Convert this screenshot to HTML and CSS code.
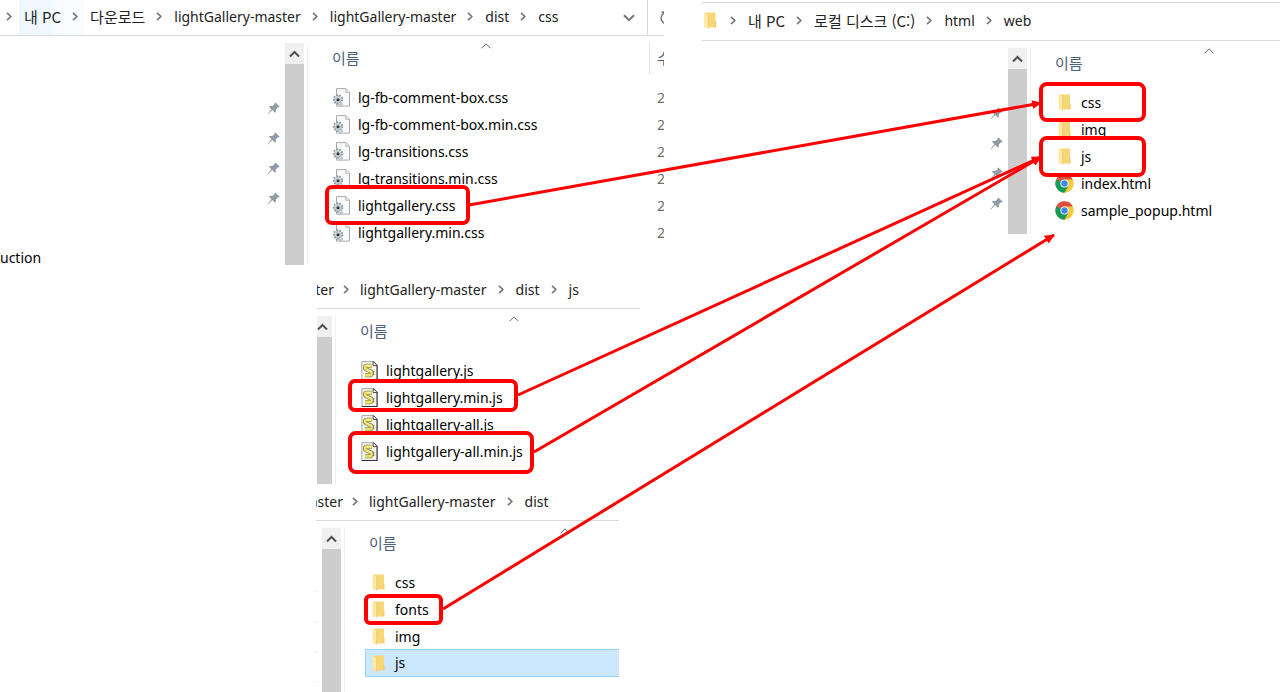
FILE: index.html
```html
<!DOCTYPE html>
<html lang="ko">
<head>
  <meta charset="UTF-8" />
  <meta name="viewport" content="width=device-width, initial-scale=1" />
  <title>lightGallery 파일 복사</title>
  <link rel="stylesheet" href="styles.css">
</head>
<body>
  <!-- Shared icons -->
  <svg class="sprite" aria-hidden="true">
    <symbol id="chev" viewBox="0 0 6 9"><path d="M1 .8 4.8 4.5 1 8.2" fill="none" stroke="#777" stroke-width="1.7"/></symbol>
    <symbol id="up" viewBox="0 0 11 8"><path d="M1 6.5 5.5 2 10 6.5" fill="none" stroke="#505050" stroke-width="2"/></symbol>
    <symbol id="sort" viewBox="0 0 10 6"><path d="M.5 5.3 5 .8 9.500 5.3" fill="none" stroke="#666" stroke-width="1"/></symbol>
    <symbol id="pin" viewBox="0 0 13 13"><path d="M8.300.4 12.600 4.600 11.800 5.500 10.900 5.200 8.800 7.400 8.900 9.900 8 10.800 5.300 8.100 1 12.300.3 12.600.6 11.900 4.400 7.200 2 4.700 2.900 3.900 5.400 4 7.700 2 7.400 1.200Z" fill="#8f9ba6"/></symbol>
    <symbol id="folder" viewBox="0 0 12 17">
      <path d="M1 .5h10.500v15H1z" fill="#f6d778"/>
      <path d="M11 9.500h1v6h-1z" fill="#eec860"/>
      <path d="M0 .8 4.200 2.600v14.200L0 14.900z" fill="#fde9a6"/>
      <path d="M4.200 2.600v14.200" stroke="#e9c766" stroke-width=".7"/>
    </symbol>
    <symbol id="css" viewBox="0 0 18 19">
      <path d="M4 .6h9.500l3.500 3.500v14H4z" fill="#fafafa" stroke="#aaa"/>
      <path d="M13.300.8v3.500h3.500" fill="#eee" stroke="#aaa" stroke-width=".8"/>
      <circle cx="5.500" cy="11.500" r="4.300" fill="#c2cdd4" stroke="#8b98a0" stroke-width="1.800" stroke-dasharray="1.700 1.300"/>
      <circle cx="8" cy="16" r="1.900" fill="#cbd5da" stroke="#9caab2" stroke-dasharray="1.200 .8"/>
      <circle cx="5.500" cy="11.700" r="1.500" fill="#30383d"/>
      <path d="M3.800 9.800 2.400 8.600M7.200 10 8.500 9" stroke="#eef3f5"/>
    </symbol>
    <symbol id="js" viewBox="0 0 18 20">
      <path d="M1 .6h12l4 4v14.800H1z" fill="#f4f4f1" stroke="#a5a5a5"/>
      <path d="M12.800.6 17 4.800V19.400H1" fill="none" stroke="#333" stroke-width="1.100"/>
      <path d="M12.800.8v4h4" fill="#fff" stroke="#333" stroke-width=".9"/>
      <path d="M11.500 5H6.500C3.500 5 3.500 8 5.700 9l4.600 2c2.200 1 1.500 4-.8 4H4.300" fill="none" stroke="#77733a" stroke-width="4.200"/>
      <path d="M11.500 5H6.500C3.500 5 3.500 8 5.700 9l4.600 2c2.200 1 1.500 4-.8 4H4.300" fill="none" stroke="#e9e16b" stroke-width="2.900"/>
      <path d="M6 8.500l5.500 2.700M6 5h5" stroke="#fffcc0" stroke-width=".8"/>
      <path d="M12 11.500h2.500M12 14h2.500" stroke="#777" stroke-width=".8"/>
    </symbol>
    <symbol id="chrome" viewBox="0 0 20 20">
      <circle cx="10" cy="10" r="9.700" fill="#fbc73b"/>
      <path d="M10 10 1.600 5.150A9.700 9.700 0 0 0 10 19.700L14.030 12.300Z" fill="#159a58"/>
      <path d="M10 10 1.600 5.150A9.700 9.700 0 0 1 18.700 5.700H10Z" fill="#db4c3f"/>
      <circle cx="10" cy="10" r="4.300" fill="#fff"/>
      <circle cx="10" cy="10" r="3.400" fill="#4688f1"/>
    </symbol>
  </svg>

  <main class="board">
    <div class="sources">
      <!-- dist/css -->
      <section class="window window-css">
        <nav class="address">
          <ol class="crumbs">
            <li class="lead"><svg class="chev"><use href="#chev"/></svg></li>
            <li class="hover"><a class="ko" href="#">내 PC</a><svg class="chev"><use href="#chev"/></svg></li>
            <li><a class="ko" href="#">다운로드</a><svg class="chev"><use href="#chev"/></svg></li>
            <li><a href="#">lightGallery-master</a><svg class="chev"><use href="#chev"/></svg></li>
            <li><a href="#">lightGallery-master</a><svg class="chev"><use href="#chev"/></svg></li>
            <li><a href="#">dist</a><svg class="chev"><use href="#chev"/></svg></li>
            <li><a href="#">css</a></li>
          </ol>
          <button class="history" aria-label="이전 위치"><svg width="12" height="8" viewBox="0 0 12 8"><path d="M1 1.200 6 6.200 11 1.200" fill="none" stroke="#777" stroke-width="2"/></svg></button>
          <button class="refresh" aria-label="새로 고침"><svg width="14" height="14" viewBox="0 0 14 14"><path d="M5 1.500A6 6 0 1 0 11 2.500M1.500 1H6v4" fill="none" stroke="#777" stroke-width="1.500"/></svg></button>
        </nav>
        <div class="content">
          <ul class="tree">
            <li><svg class="pin"><use href="#pin"/></svg></li>
            <li><svg class="pin"><use href="#pin"/></svg></li>
            <li><svg class="pin"><use href="#pin"/></svg></li>
            <li><svg class="pin"><use href="#pin"/></svg></li>
            <li></li>
            <li class="label">uction</li>
          </ul>
          <div class="scrollbar"><button aria-label="위로"><svg><use href="#up"/></svg></button></div>
          <div class="files">
            <table>
              <thead><tr><th class="name"><button><svg class="sort"><use href="#sort"/></svg>이름</button></th><th class="date">수</th></tr></thead>
              <tbody>
                <tr><td><div class="file"><svg class="icon"><use href="#css"/></svg>lg-fb-comment-box.css</div></td><td class="date">2</td></tr>
                <tr><td><div class="file"><svg class="icon"><use href="#css"/></svg>lg-fb-comment-box.min.css</div></td><td class="date">2</td></tr>
                <tr><td><div class="file"><svg class="icon"><use href="#css"/></svg>lg-transitions.css</div></td><td class="date">2</td></tr>
                <tr><td><div class="file"><svg class="icon"><use href="#css"/></svg>lg-transitions.min.css</div></td><td class="date">2</td></tr>
                <tr><td><div class="file"><svg class="icon"><use href="#css"/></svg>lightgallery.css</div></td><td class="date">2</td></tr>
                <tr><td><div class="file"><svg class="icon"><use href="#css"/></svg>lightgallery.min.css</div></td><td class="date">2</td></tr>
              </tbody>
            </table>
          </div>
        </div>
      </section>

      <!-- dist/js -->
      <section class="window window-js">
        <nav class="address">
          <ol class="crumbs">
            <li class="cut"><a href="#">ter</a><svg class="chev"><use href="#chev"/></svg></li>
            <li><a href="#">lightGallery-master</a><svg class="chev"><use href="#chev"/></svg></li>
            <li><a href="#">dist</a><svg class="chev"><use href="#chev"/></svg></li>
            <li><a href="#">js</a></li>
          </ol>
        </nav>
        <div class="content">
          <div class="scrollbar"><button aria-label="위로"><svg><use href="#up"/></svg></button></div>
          <div class="files">
            <table>
              <thead><tr><th class="name"><button><svg class="sort"><use href="#sort"/></svg>이름</button></th></tr></thead>
              <tbody>
                <tr><td><div class="file"><svg class="icon"><use href="#js"/></svg>lightgallery.js</div></td></tr>
                <tr><td><div class="file"><svg class="icon"><use href="#js"/></svg>lightgallery.min.js</div></td></tr>
                <tr><td><div class="file"><svg class="icon"><use href="#js"/></svg>lightgallery-all.js</div></td></tr>
                <tr><td><div class="file"><svg class="icon"><use href="#js"/></svg>lightgallery-all.min.js</div></td></tr>
              </tbody>
            </table>
          </div>
        </div>
      </section>

      <!-- dist -->
      <section class="window window-dist">
        <nav class="address">
          <ol class="crumbs">
            <li class="cut"><a href="#">aster</a><svg class="chev"><use href="#chev"/></svg></li>
            <li><a href="#">lightGallery-master</a><svg class="chev"><use href="#chev"/></svg></li>
            <li><a href="#">dist</a></li>
          </ol>
        </nav>
        <div class="content">
          <ul class="tree">
            <li><svg class="pin"><use href="#pin"/></svg></li>
            <li><svg class="pin"><use href="#pin"/></svg></li>
            <li><svg class="pin"><use href="#pin"/></svg></li>
            <li><svg class="pin"><use href="#pin"/></svg></li>
          </ul>
          <div class="scrollbar"><button aria-label="위로"><svg><use href="#up"/></svg></button></div>
          <div class="files">
            <table>
              <thead><tr><th class="name"><button><svg class="sort"><use href="#sort"/></svg>이름</button></th></tr></thead>
              <tbody>
                <tr><td><div class="file"><svg class="icon folder"><use href="#folder"/></svg>css</div></td></tr>
                <tr><td><div class="file"><svg class="icon folder"><use href="#folder"/></svg>fonts</div></td></tr>
                <tr><td><div class="file"><svg class="icon folder"><use href="#folder"/></svg>img</div></td></tr>
                <tr class="selected"><td><div class="file"><svg class="icon folder"><use href="#folder"/></svg>js</div></td></tr>
              </tbody>
            </table>
          </div>
        </div>
      </section>
    </div>

    <!-- html/web -->
    <section class="window window-web">
      <nav class="address">
        <ol class="crumbs">
          <li class="root"><svg class="icon folder"><use href="#folder"/></svg><svg class="chev"><use href="#chev"/></svg></li>
          <li><a class="ko" href="#">내 PC</a><svg class="chev"><use href="#chev"/></svg></li>
          <li><a class="ko" href="#">로컬 디스크 (C:)</a><svg class="chev"><use href="#chev"/></svg></li>
          <li><a href="#">html</a><svg class="chev"><use href="#chev"/></svg></li>
          <li><a href="#">web</a></li>
        </ol>
      </nav>
      <div class="content">
        <ul class="tree">
          <li><svg class="pin"><use href="#pin"/></svg></li>
          <li><svg class="pin"><use href="#pin"/></svg></li>
          <li><svg class="pin"><use href="#pin"/></svg></li>
          <li><svg class="pin"><use href="#pin"/></svg></li>
        </ul>
        <div class="scrollbar"><button aria-label="위로"><svg><use href="#up"/></svg></button></div>
        <div class="files">
          <table>
            <thead><tr><th class="name"><button><svg class="sort"><use href="#sort"/></svg>이름</button></th></tr></thead>
            <tbody>
              <tr><td><div class="file"><svg class="icon folder"><use href="#folder"/></svg>css</div></td></tr>
              <tr><td><div class="file"><svg class="icon folder"><use href="#folder"/></svg>img</div></td></tr>
              <tr><td><div class="file"><svg class="icon folder"><use href="#folder"/></svg>js</div></td></tr>
              <tr><td><div class="file"><svg class="icon"><use href="#chrome"/></svg>index.html</div></td></tr>
              <tr><td><div class="file"><svg class="icon"><use href="#chrome"/></svg>sample_popup.html</div></td></tr>
            </tbody>
          </table>
        </div>
      </div>
    </section>

    <!-- Red boxes and arrows from source files to target folders -->
    <svg class="notes" viewBox="0 0 1280 692" aria-hidden="true">
      <defs>
        <marker id="head" markerUnits="userSpaceOnUse" markerWidth="10" markerHeight="10" refX="9" refY="5" orient="auto"><path d="M0 .5 10 5 0 9.500Z" fill="#f00"/></marker>
      </defs>
      <g fill="none" stroke="#f00" stroke-width="4">
        <rect x="327" y="187" width="141" height="36" rx="5"/>
        <rect x="350" y="381" width="166" height="29" rx="5"/>
        <rect x="350" y="433" width="182" height="39" rx="6"/>
        <rect x="366" y="596" width="75" height="27" rx="4"/>
        <rect x="1041" y="84" width="103" height="36" rx="6"/>
        <rect x="1041" y="138" width="103" height="37" rx="6"/>
      </g>
      <g stroke="#f00" stroke-width="3">
        <path d="M469 205 1041 103" marker-end="url(#head)"/>
        <path d="M518 395 1041 157" marker-end="url(#head)"/>
        <path d="M534 452 1041 157" marker-end="url(#head)"/>
        <path d="M443 609 1054 235" marker-end="url(#head)"/>
      </g>
    </svg>
  </main>
</body>
</html>
```

FILE: styles.css
```css
:root {
  --line: #d9d9d9;
  --thumb: #cdcdcd;
  --heading: #4c607a;
}

* {
  box-sizing: border-box;
}

body {
  margin: 0;
  background: #fff;
  color: #000;
  font-family: "Noto Sans", "Noto Sans CJK KR", sans-serif;
  font-size: 14px;
  line-height: 20px;
}

ul,
ol {
  list-style: none;
  margin: 0;
  padding: 0;
}

a {
  color: #222;
  text-decoration: none;
}

button {
  border: 0;
  padding: 0;
  background: none;
  font: inherit;
  color: inherit;
}

svg {
  display: block;
  flex: none;
}

.sprite {
  position: absolute;
  width: 0;
  height: 0;
}

.ko {
  font-family: "Noto Sans CJK KR", sans-serif;
  font-size: 15px;
}

.board {
  position: relative;
  display: grid;
  grid-template-columns: 702px 1fr;
  align-items: start;
  overflow: hidden;
}

.window {
  overflow: hidden;
}

.window-css {
  width: 664px;
}

.window-js {
  width: 323px;
  margin: 8px 0 0 317px;
}

.window-dist {
  width: 303px;
  margin: 1px 0 0 316px;
}

.window-web {
  margin-top: 2px;
  border-top: 1px solid var(--line);
}

/* Address bar */
.address {
  display: flex;
  height: 36px;
  border-bottom: 1px solid var(--line);
}

.window-web .address {
  height: 38px;
}

.crumbs {
  display: flex;
  flex: 1;
  white-space: nowrap;
}

.crumbs li {
  display: flex;
  align-items: center;
  gap: 11px;
  padding: 0 12px 2px 0;
}

.chev {
  width: 6px;
  height: 9px;
}

.crumbs .lead {
  padding-left: 6px;
}

.crumbs .hover {
  margin-left: -5px;
  padding-left: 5px;
  padding-right: 6px;
  margin-right: 6px;
  background: linear-gradient(90deg, #f0f8ff 50%, #f8fcff 50%);
}

.crumbs .cut {
  justify-content: flex-end;
  gap: 9px;
  width: 43px;
  padding-right: 11px;
  overflow: hidden;
}

.window-dist .crumbs .cut {
  width: 53px;
}

.crumbs .root {
  gap: 14px;
  padding-left: 2px;
}

.history {
  display: grid;
  place-items: center;
  width: 38px;
  border-right: 1px solid var(--line);
}

.refresh {
  display: flex;
  align-items: center;
  width: 16px;
  padding-left: 12px;
  overflow: hidden;
}

/* Folder view */
.content {
  display: flex;
  padding-top: 7px;
}

.window-css .content {
  height: 229px;
}

.window-js .content {
  height: 175px;
}

.window-dist .content {
  height: 171px;
}

.window-web .content {
  height: 193px;
}

.tree {
  flex: none;
  width: 285px;
  padding-top: 50px;
  overflow: hidden;
}

.window-dist .tree {
  width: 6px;
}

.window-web .tree {
  width: 306px;
}

.tree li {
  display: flex;
  align-items: center;
  justify-content: flex-end;
  height: 30px;
  padding-right: 5px;
}

.tree .label {
  justify-content: flex-start;
}

.pin {
  width: 13px;
  height: 13px;
}

.scrollbar {
  flex: none;
  width: 19px;
  background: var(--thumb);
}

.window-js .scrollbar {
  width: 15px;
}

.scrollbar button {
  display: flex;
  align-items: center;
  justify-content: flex-end;
  width: 100%;
  height: 21px;
  padding-right: 4px;
  background: #f0f0f0;
}

.scrollbar svg {
  width: 11px;
  height: 8px;
}

.files {
  flex: 1;
  min-width: 0;
  margin-left: 3px;
  padding-left: 20px;
  border-left: 1px solid #f0f0f0;
  overflow: hidden;
}

table {
  width: 400px;
  table-layout: fixed;
  border-collapse: collapse;
}

th,
td {
  padding: 0;
  text-align: left;
  font-weight: 400;
  white-space: nowrap;
}

th {
  height: 41px;
  color: var(--heading);
  font-family: "Noto Sans CJK KR", sans-serif;
  font-size: 15px;
  line-height: 18px;
  vertical-align: top;
}

.name {
  width: 321px;
}

.window-dist .name {
  width: 400px;
}

.name button {
  display: block;
  width: 316px;
  padding: 0 4px;
  text-align: left;
}

.window-dist .name button {
  width: 400px;
}

.sort {
  width: 10px;
  height: 6px;
  margin: 0 auto;
}

.date {
  padding-left: 8px;
  color: #6d6d6d;
}

th.date {
  padding-top: 6px;
  color: var(--heading);
  background: linear-gradient(#e5e5e5, #e5e5e5) left top / 1px 32px no-repeat;
}

.file {
  display: flex;
  align-items: center;
  gap: 7px;
  height: 27px;
  padding-left: 4px;
}

.icon {
  width: 19px;
  height: 19px;
}

.file .folder {
  height: 17px;
}

.root .folder {
  width: 12px;
  height: 17px;
}

.selected .file {
  height: 28px;
  margin-top: -1px;
  border: 1px solid #99d1ff;
  padding-left: 3px;
  background: #cce8ff;
}

/* Annotation layer over the windows */
.notes {
  position: absolute;
  top: 0;
  left: 0;
  width: 1280px;
  height: 692px;
  pointer-events: none;
}
```
